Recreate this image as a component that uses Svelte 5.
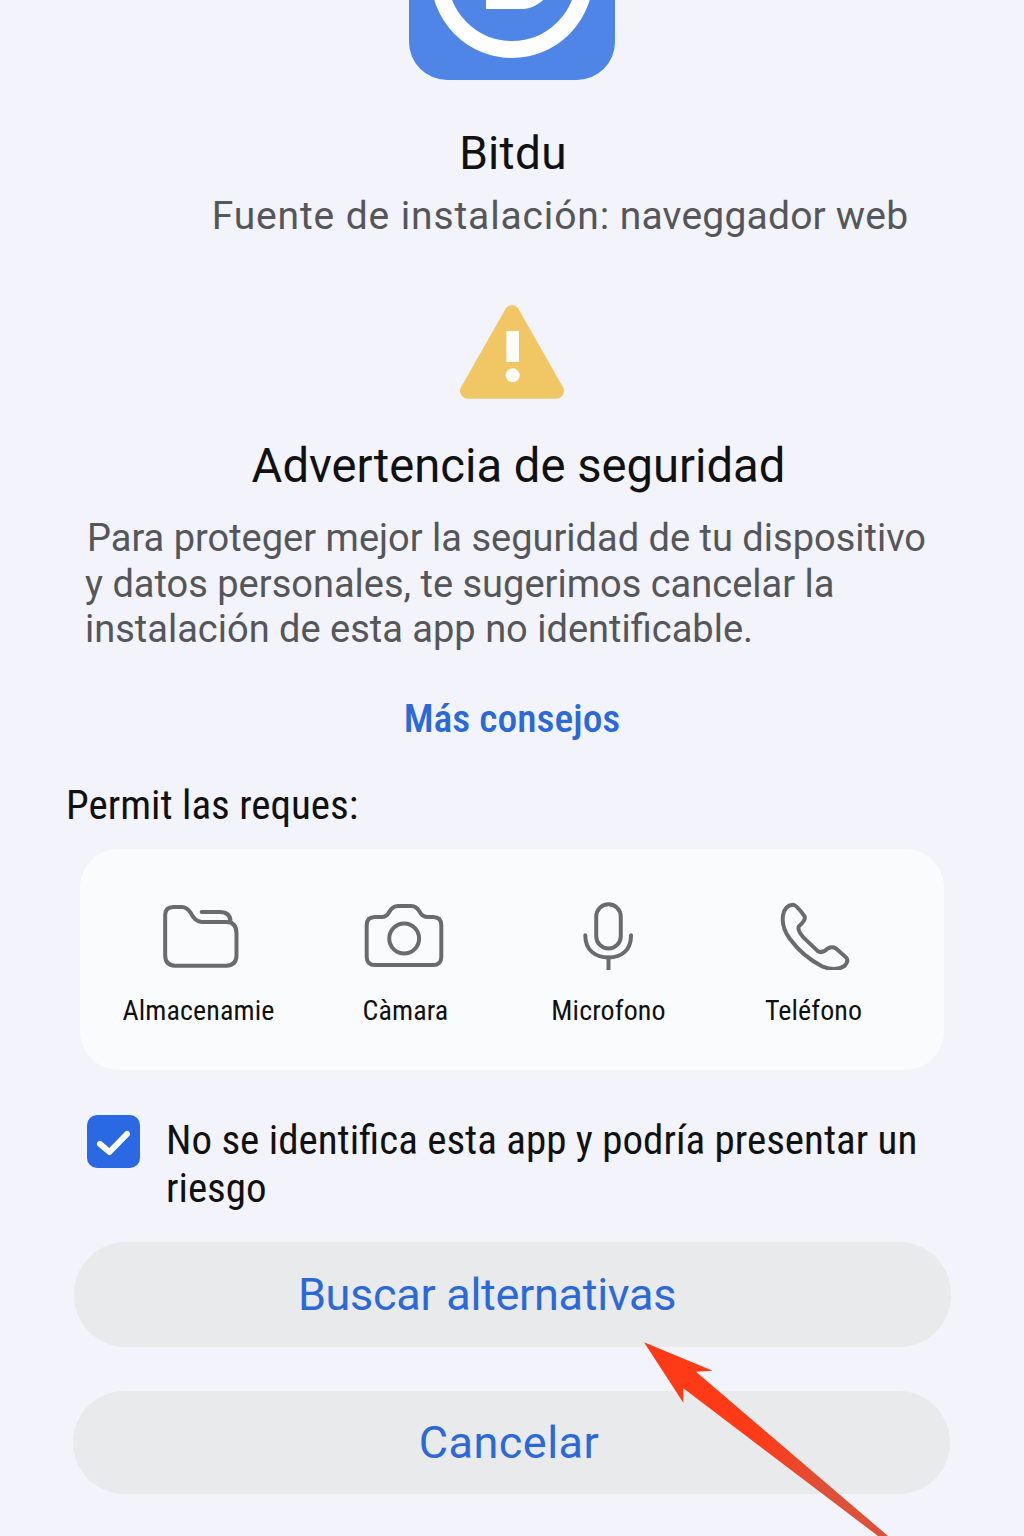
<script>
	const permissions = [
		{ id: 'folder', label: 'Almacenamie' },
		{ id: 'camera', label: 'Càmara' },
		{ id: 'mic', label: 'Microfono' },
		{ id: 'phone', label: 'Teléfono' }
	];
</script>

<main>
	<div class="app-icon">
		<svg viewBox="0 0 206 206" width="206" height="206">
			<circle cx="103" cy="103" r="72.5" fill="none" stroke="#fff" stroke-width="17" />
			<path d="M77 40 H110 C140 40 150 90 150 100 C148 115 130 135 114 135 H77 Z" fill="#fff" />
		</svg>
	</div>

	<h1 class="app-name">Bitdu</h1>
	<p class="source"><span class="src-label">Fuente de instalación:</span> <span class="src-value">naveggador web</span></p>

	<svg class="warn" viewBox="50 35 330 300" width="110" height="100">
		<path d="M215 68 L82 302 H348 Z" fill="#f1c766" stroke="#f1c766" stroke-width="46" stroke-linejoin="round" />
		<rect x="198" y="122" width="38" height="93" fill="#fdfcf8" />
		<circle cx="217" cy="255" r="21" fill="#fdfcf8" />
	</svg>

	<h2 class="warn-title">Advertencia de seguridad</h2>
	<p class="warn-text">
		<span class="first">Para proteger mejor la seguridad de tu dispositivo</span>
		<span>y datos personales, te sugerimos cancelar la</span>
		<span>instalación de esta app no identificable.</span>
	</p>

	<div class="more">Más consejos</div>

	<div class="perm-title">Permit las reques:</div>

	<section class="card">
		{#each permissions as p}
			<div class="perm {p.id}">
				{#if p.id == 'folder'}
					<svg viewBox="270 185 240 205" width="80" height="68">
						<path d="M285 225 Q285 200 310 200 H335 Q350 200 362 218 Q375 245 395 245 H470 Q500 245 500 280 V345 Q500 377 470 377 H315 Q285 377 285 345 Z" />
						<path d="M395 215 H450 Q482 215 482 245" />
					</svg>
				{:else if p.id == 'camera'}
					<svg viewBox="880 185 245 205" width="82" height="68">
						<path d="M890 255 Q890 230 915 230 H935 Q950 230 958 215 Q968 197 985 197 H1025 Q1040 197 1050 215 Q1058 230 1075 230 H1090 Q1115 230 1115 255 V350 Q1115 375 1090 375 H915 Q890 375 890 350 Z" />
						<circle cx="1003" cy="295" r="45" />
					</svg>
				{:else if p.id == 'mic'}
					<svg viewBox="150 185 230 205" width="77" height="68">
						<rect x="228" y="192" width="74" height="133" rx="37" />
						<path d="M195 285 C195 330 225 352 265 352 C305 352 333 330 333 285" />
						<path d="M265 352 V390" />
					</svg>
				{:else}
					<svg viewBox="770 185 230 205" width="77" height="68">
						<path d="M790 225 Q795 195 820 193 Q832 195 855 228 Q860 240 838 258 Q832 268 850 290 L895 333 Q908 342 925 325 Q938 318 950 325 L980 352 Q990 362 975 378 Q950 395 910 380 Q850 350 810 295 Q785 260 790 225 Z" />
					</svg>
				{/if}
				<span>{p.label}</span>
			</div>
		{/each}
	</section>

	<label class="consent">
		<svg class="check" viewBox="0 0 53 53" width="53" height="53">
			<rect width="53" height="53" rx="10" fill="#2b68e3" />
			<path d="M13 29 L22.5 37 L40 19" fill="none" stroke="#fff" stroke-width="6" stroke-linecap="round" stroke-linejoin="round" />
		</svg>
		<span class="consent-text">No se identifica esta app y podría presentar un riesgo</span>
	</label>

	<button class="btn alt">Buscar alternativas</button>
	<button class="btn cancel">Cancelar</button>

	<svg class="arrow" viewBox="0 0 1024 1536" width="1024" height="1536">
		<defs>
			<linearGradient id="arrow-fill" gradientUnits="userSpaceOnUse" x1="700" y1="1390" x2="880" y2="1536">
				<stop offset="0.3" stop-color="#ff3a17" />
				<stop offset="0.7" stop-color="#df5038" />
			</linearGradient>
		</defs>
		<polygon points="644,1342.3 712.7,1370.7 696,1371.7 888,1536 878,1536 683.3,1388.3 683.3,1402.7" fill="url(#arrow-fill)" />
	</svg>
</main>

<style>
	:global(body) {
		background: #f2f3fb;
	}

	main {
		position: relative;
		width: 1024px;
		height: 1536px;
		overflow: hidden;
		display: flex;
		flex-direction: column;
		align-items: center;
		font-family: Roboto, "Liberation Sans", sans-serif;
		color: #111;
	}

	.app-icon {
		width: 206px;
		height: 206px;
		margin-top: -126px;
		flex: none;
		background: #4f85e6;
		border-radius: 38px;
	}

	.app-icon svg {
		display: block;
	}

	.app-name {
		margin: 45px 0 0 2px;
		font-size: 46px;
		line-height: 56px;
		font-weight: 400;
		letter-spacing: 0.3px;
	}

	.source {
		margin: 9px 0 0 96px;
		font-size: 39px;
		line-height: 52px;
		color: #55565a;
		white-space: nowrap;
	}

	.src-label {
		letter-spacing: 0.87px;
	}

	.src-value {
		letter-spacing: 0.2px;
	}

	.warn {
		margin-top: 60px;
		flex: none;
	}

	.warn-title {
		margin: 34px 0 0 13px;
		font-size: 47.2px;
		line-height: 60px;
		font-weight: 400;
		white-space: nowrap;
	}

	.warn-text {
		margin: 20px 0 0;
		align-self: flex-start;
		padding-left: 85px;
		font-size: 38px;
		line-height: 45.5px;
		color: #55565a;
		white-space: nowrap;
	}

	.warn-text span {
		display: block;
	}

	.warn-text .first {
		padding-left: 2px;
	}

	.more {
		margin-top: 43px;
		font-size: 39.5px;
		line-height: 46px;
		font-weight: 500;
		font-stretch: 87.5%;
		color: #2b68d8;
	}

	.perm-title {
		align-self: flex-start;
		margin: 40px 0 0 66px;
		font-size: 41px;
		line-height: 46px;
		font-stretch: 87.5%;
	}

	.card {
		box-sizing: border-box;
		flex: none;
		width: 864px;
		height: 221px;
		margin-top: 21px;
		padding: 53px 16px 0;
		display: flex;
		background: #fafbfd;
		border-radius: 38px;
	}

	.perm {
		width: 205px;
		display: flex;
		flex-direction: column;
		align-items: center;
		font-size: 28px;
		line-height: 34px;
		font-stretch: 87.5%;
		letter-spacing: 0.1px;
		white-space: nowrap;
	}

	.perm svg {
		fill: none;
		stroke: #6b6b6d;
		stroke-width: 12;
		stroke-linecap: round;
		stroke-linejoin: round;
		margin-bottom: 24px;
	}

	.perm.folder svg {
		margin-left: 3px;
	}

	.perm.phone svg {
		margin-left: 2px;
	}

	.perm.camera span {
		margin-left: 4px;
	}

	.consent {
		align-self: flex-start;
		margin: 45px 0 0 87px;
		width: 860px;
		display: flex;
		gap: 26px;
		font-size: 41px;
		line-height: 48px;
		font-stretch: 87.5%;
	}

	.consent-text {
		padding-top: 1px;
	}

	.check {
		flex: none;
	}

	.btn {
		flex: none;
		display: block;
		border: 0;
		padding: 0;
		background: #e8eaec;
		color: #2b68d8;
		font-family: inherit;
		font-size: 45px;
		border-radius: 52px;
		width: 877px;
	}

	.alt {
		height: 105px;
		margin-top: 30px;
		padding-right: 50px;
		letter-spacing: -0.3px;
	}

	.cancel {
		height: 103px;
		margin-top: 44px;
		margin-left: -2px;
		padding-right: 4px;
		letter-spacing: 0.5px;
	}

	.arrow {
		position: absolute;
		left: 0;
		top: 0;
		pointer-events: none;
	}
</style>
